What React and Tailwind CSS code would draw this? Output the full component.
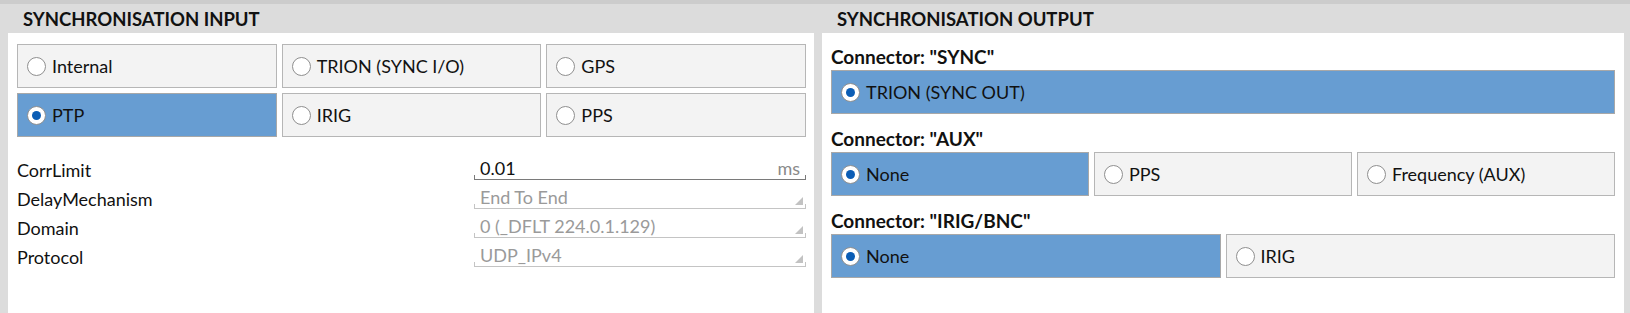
import React from "react";

const font = { fontFamily: "Lato, 'Open Sans', sans-serif" };

function Radio({ checked }) {
  return (
    <span className="flex h-[19px] w-[19px] shrink-0 items-center justify-center rounded-full border border-[#8f8f8f] bg-white">
      {checked && <span className="h-[9px] w-[9px] rounded-full bg-[#0b5db5]" />}
    </span>
  );
}

function Option({ label, checked }) {
  return (
    <div
      className={
        "flex h-[44px] items-center gap-[6px] border pl-[9px] text-[18px] text-[#111] " +
        (checked ? "border-[#a8a8a8] bg-[#679dd2]" : "border-[#b6b6b6] bg-[#f3f3f3]")
      }
    >
      <Radio checked={checked} />
      <span>{label}</span>
    </div>
  );
}

function Ticks({ color }) {
  return (
    <>
      <span className={"absolute bottom-0 left-0 h-[4px] w-px " + color} />
      <span className={"absolute bottom-0 right-0 h-[4px] w-px " + color} />
    </>
  );
}

function Prop({ label, children }) {
  return (
    <div className="flex h-[29px]">
      <div className="flex w-[457px] items-center text-[18px] text-[#111]">{label}</div>
      <div className="flex-1 pt-[2px]">{children}</div>
    </div>
  );
}

function NumInput() {
  return (
    <div className="relative flex h-[22px] items-center justify-between border-b border-[#7a7a7a] pl-[6px] pr-[6px] text-[18px]">
      <span className="text-[#111]">0.01</span>
      <span className="text-[#8a8a8a]">ms</span>
      <Ticks color="bg-[#7a7a7a]" />
    </div>
  );
}

function Select({ value }) {
  return (
    <div className="relative flex h-[22px] items-center border-b border-[#c4c4c4] pl-[6px] text-[18px] text-[#9a9a9a]">
      <span>{value}</span>
      <svg className="absolute bottom-[3px] right-[3px]" width="8" height="8" viewBox="0 0 8 8">
        <polygon points="8,0 8,8 0,8" fill="#c2c2c2" />
      </svg>
      <Ticks color="bg-[#c4c4c4]" />
    </div>
  );
}

function Section({ title, children }) {
  return (
    <div className="flex flex-col">
      <div className="flex h-[26px] items-center text-[19px] font-bold text-[#111]">{title}</div>
      {children}
    </div>
  );
}

export default function App() {
  return (
    <div style={font} className="flex h-[313px] w-[1630px] flex-col overflow-hidden border-t-[4px] border-[#cccccc] bg-[#dcdcdc]">
      <div className="flex flex-1 pl-[8px]">
        {/* Left panel */}
        <div className="flex w-[806px] flex-col">
          <div className="flex h-[29px] items-center pl-[15px] pt-[2px] text-[18.5px] font-bold text-[#111]">
            SYNCHRONISATION INPUT
          </div>
          <div className="flex-1 bg-white pl-[9px] pr-[8px] pt-[11px]">
            <div className="grid grid-cols-3 gap-[5px]">
              <Option label="Internal" />
              <Option label="TRION (SYNC I/O)" />
              <Option label="GPS" />
              <Option label="PTP" checked />
              <Option label="IRIG" />
              <Option label="PPS" />
            </div>
            <div className="mt-[19px] flex flex-col">
              <Prop label="CorrLimit"><NumInput /></Prop>
              <Prop label="DelayMechanism"><Select value="End To End" /></Prop>
              <Prop label="Domain"><Select value="0 (_DFLT 224.0.1.129)" /></Prop>
              <Prop label="Protocol"><Select value="UDP_IPv4" /></Prop>
            </div>
          </div>
        </div>
        <div className="w-[8px]" />
        {/* Right panel */}
        <div className="flex w-[802px] flex-col">
          <div className="flex h-[29px] items-center pl-[15px] pt-[2px] text-[18.5px] font-bold text-[#111]">
            SYNCHRONISATION OUTPUT
          </div>
          <div className="flex flex-1 flex-col gap-[12px] bg-white px-[9px] pt-[11px]">
            <Section title={'Connector: "SYNC"'}>
              <Option label="TRION (SYNC OUT)" checked />
            </Section>
            <Section title={'Connector: "AUX"'}>
              <div className="grid grid-cols-3 gap-[5px]">
                <Option label="None" checked />
                <Option label="PPS" />
                <Option label="Frequency (AUX)" />
              </div>
            </Section>
            <Section title={'Connector: "IRIG/BNC"'}>
              <div className="grid grid-cols-2 gap-[5px]">
                <Option label="None" checked />
                <Option label="IRIG" />
              </div>
            </Section>
          </div>
        </div>
      </div>
    </div>
  );
}
